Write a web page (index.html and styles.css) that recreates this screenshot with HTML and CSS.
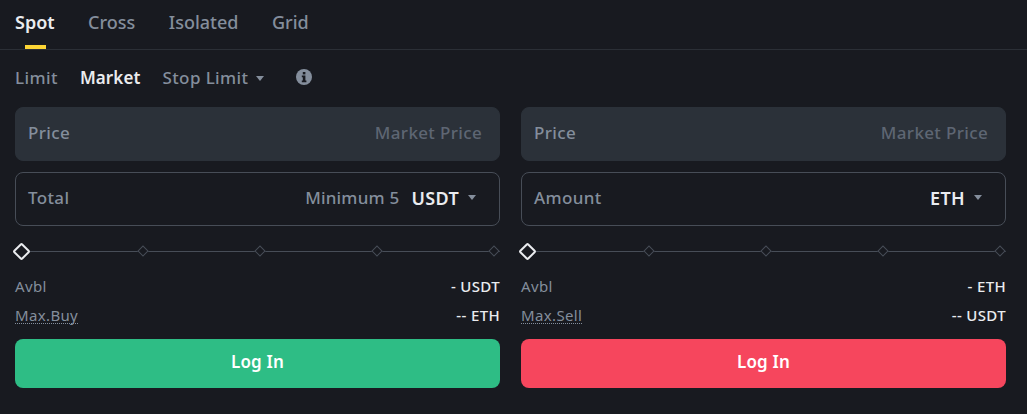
FILE: index.html
```html
<!DOCTYPE html>
<html lang="en">
    <head>
        <meta charset="UTF-8" />
        <meta name="viewport" content="width=device-width, initial-scale=1.0" />
        <title>Spot order form</title>
        <link rel="stylesheet" href="styles.css">
    </head>
    <body>
        <nav class="tabs">
            <a class="tab active">Spot</a>
            <a class="tab">Cross</a>
            <a class="tab">Isolated</a>
            <a class="tab">Grid</a>
        </nav>

        <div class="types">
            <a class="type">Limit</a>
            <a class="type active">Market</a>
            <a class="type">Stop Limit <i class="caret"></i></a>
            <svg class="info" width="16" height="16" viewBox="0 0 16 16">
                <circle cx="8" cy="8" r="8" fill="#848e9c" />
                <rect x="6.8" y="3" width="2.6" height="2.4" fill="#181a20" />
                <path d="M5.8 6.6h3.6v5h1v1.600H5.800v-1.600h1v-3.400h-1z" fill="#181a20" />
            </svg>
        </div>

        <div class="forms">
            <form class="order">
                <div class="field filled">
                    <span class="label">Price</span>
                    <span class="hint">Market Price</span>
                </div>
                <div class="field">
                    <span class="label">Total</span>
                    <span class="note">Minimum 5</span>
                    <span class="unit">USDT</span>
                    <i class="caret"></i>
                </div>
                <div class="slider">
                    <i class="knob"></i><i class="dot"></i><i class="dot"></i><i class="dot"></i><i class="dot"></i>
                </div>
                <div class="row avbl"><span>Avbl</span><b>- USDT</b></div>
                <div class="row max"><span class="dotted">Max.Buy</span><b>-- ETH</b></div>
                <button type="button" class="buy">Log In</button>
            </form>

            <form class="order">
                <div class="field filled">
                    <span class="label">Price</span>
                    <span class="hint">Market Price</span>
                </div>
                <div class="field">
                    <span class="label">Amount</span>
                    <span class="unit">ETH</span>
                    <i class="caret"></i>
                </div>
                <div class="slider">
                    <i class="knob"></i><i class="dot"></i><i class="dot"></i><i class="dot"></i><i class="dot"></i>
                </div>
                <div class="row avbl"><span>Avbl</span><b>- ETH</b></div>
                <div class="row max"><span class="dotted">Max.Sell</span><b>-- USDT</b></div>
                <button type="button" class="sell">Log In</button>
            </form>
        </div>
    </body>
</html>
```

FILE: styles.css
```css
* {
    box-sizing: border-box;
}

body {
    margin: 0;
    height: 414px;
    overflow: hidden;
    color: #eaecef;
    background-color: #181a20;
    font-family: "Noto Sans", "Liberation Sans", sans-serif;
}

.tabs {
    display: flex;
    gap: 33.5px;
    height: 50px;
    padding-left: 15px;
    border-bottom: 1px solid #2b2f36;
}

.tab {
    position: relative;
    font-size: 18px;
    font-weight: 500;
    line-height: 45px;
    color: #848e9c;
}

.tab.active {
    color: #eaecef;
    font-weight: 600;
}

.tab.active::after {
    content: "";
    position: absolute;
    left: 10px;
    bottom: 0;
    width: 21px;
    height: 4px;
    background-color: #fcd535;
}

.types {
    display: flex;
    align-items: center;
    gap: 22px;
    height: 57px;
    padding: 0 0 3px 15px;
    font-size: 17px;
    font-weight: 500;
    letter-spacing: 0.4px;
    color: #848e9c;
}

.type.active {
    color: #eaecef;
    font-weight: 600;
    letter-spacing: 0.1px;
}

.type .caret {
    margin-left: 3px;
}

.info {
    margin-left: 10px;
}

.caret {
    display: inline-block;
    width: 0;
    height: 0;
    margin-left: 4px;
    vertical-align: middle;
    border: 4.5px solid transparent;
    border-top: 5px solid #848e9c;
    border-bottom: 0;
}

.forms {
    display: flex;
    gap: 21px;
    padding: 0 21px 0 15px;
}

.order {
    flex: 1;
}

.field {
    display: flex;
    align-items: center;
    height: 54px;
    margin-bottom: 11px;
    padding: 0 23px 3px 12px;
    border: 1px solid #474d57;
    border-radius: 8px;
    font-size: 17px;
    font-weight: 500;
    letter-spacing: 0.35px;
    color: #848e9c;
}

.field.filled {
    padding-right: 17px;
    border-color: #2b3139;
    background-color: #2b3139;
}

.label {
    flex: 1;
}

.hint {
    color: #5e6673;
}

.note {
    margin-right: 12px;
    letter-spacing: 0.2px;
}

.unit {
    color: #eaecef;
    font-size: 18px;
    font-weight: 600;
}

.field .caret {
    margin-left: 9px;
}

.slider {
    display: flex;
    align-items: center;
    justify-content: space-between;
    height: 14px;
    margin: 18px 0 18px;
    padding-right: 2px;
    background: linear-gradient(#474d57, #474d57) center / 100% 1px no-repeat;
}

.knob,
.dot {
    display: block;
    transform: rotate(45deg);
    background-color: #181a20;
}

.knob {
    width: 13px;
    height: 13px;
    margin-right: 2px;
    border: 2px solid #eaecef;
    border-radius: 2px;
}

.dot {
    width: 8px;
    height: 8px;
    border: 1px solid #474d57;
}

.row {
    display: flex;
    justify-content: space-between;
    align-items: center;
    height: 20px;
    font-size: 15px;
    letter-spacing: 0.35px;
    color: #848e9c;
}

.row b {
    font-weight: 500;
    color: #eaecef;
}

.avbl {
    margin-bottom: 9px;
}

.max {
    margin-bottom: 14px;
}

.dotted {
    border-bottom: 1px dotted #848e9c;
    line-height: 16px;
}

button {
    display: block;
    width: 100%;
    height: 49px;
    padding-bottom: 5px;
    border: 0;
    border-radius: 8px;
    color: #fff;
    font-family: inherit;
    font-size: 17px;
    font-weight: 600;
    letter-spacing: 0.2px;
}

.buy {
    background-color: #2ebd85;
}

.sell {
    background-color: #f6465d;
}
```
